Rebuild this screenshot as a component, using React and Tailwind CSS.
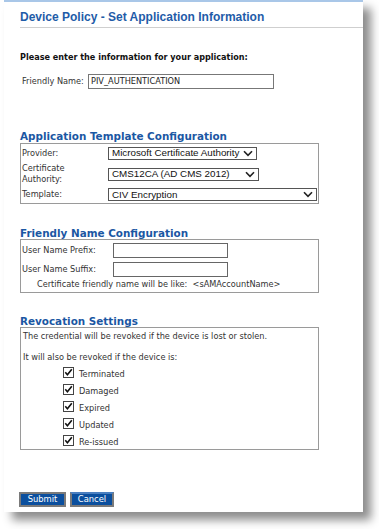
import React from 'react';

const verdana = { fontFamily: '"DejaVu Sans", Verdana, sans-serif' };
const arial = { fontFamily: '"Liberation Sans", Arial, sans-serif' };

const Chevron = () => (
  <svg width="10" height="7" viewBox="0 0 10 7" className="shrink-0">
    <path d="M1 1.2 L5 5.4 L9 1.2" fill="none" stroke="#222" strokeWidth="1.6" />
  </svg>
);

const FakeSelect = ({ value, width }) => (
  <div
    className="flex items-center justify-between h-[13px] border border-[#555] bg-white pl-[3px] pr-[3px] text-[9.8px] text-[#111] leading-none"
    style={{ ...arial, width }}
  >
    <span className="whitespace-nowrap">{value}</span>
    <Chevron />
  </div>
);

const CheckBox = () => (
  <svg width="11" height="11" viewBox="0 0 11 11" className="shrink-0">
    <rect x="0.5" y="0.5" width="10" height="10" fill="#fff" stroke="#444" />
    <path d="M2.3 5.3 L4.4 7.8 L8.8 2.2" fill="none" stroke="#111" strokeWidth="1.6" />
  </svg>
);

const Heading = ({ children, className = '' }) => (
  <div className={`text-[10.4px] font-bold text-[#1b57a3] leading-[12px] ${className}`} style={verdana}>
    {children}
  </div>
);

export default function App() {
  const reasons = ['Terminated', 'Damaged', 'Expired', 'Updated', 'Re-issued'];

  return (
    <div className="w-[379px] h-[529px] bg-white overflow-hidden">
      <div className="ml-[4px] w-[359px] h-[512px] bg-white border-t-2 border-[#a9c7e8] shadow-[8px_8px_9px_rgba(0,0,0,0.45)] flex flex-col text-[#333]" style={verdana}>
        <div className="ml-[16px] mt-[7px] text-[12px] font-bold text-[#1f5ca8] leading-[16px]" style={arial}>
          Device Policy - Set Application Information
        </div>
        <div className="ml-[16px] mt-[2px] h-px bg-[#cfcfcf]" />

        <div className="ml-[16px] mt-[24px] text-[8.1px] font-bold text-[#111] leading-[10px]">
          Please enter the information for your application:
        </div>

        <div className="ml-[18px] mt-[12px] flex items-center h-[15px]">
          <span className="text-[8.2px] w-[66px]">Friendly Name:</span>
          <div className="w-[186px] h-[15px] border border-[#777] bg-white flex items-center pl-[2px] text-[8.2px] text-[#222]">
            PIV_AUTHENTICATION
          </div>
        </div>

        <Heading className="ml-[16px] mt-[41px]">Application Template Configuration</Heading>
        <div className="ml-[16px] mt-[1px] w-[299px] border border-[#9a9a9a] pt-[1px] pb-[1px] flex flex-col gap-[2px]">
          <div className="flex items-center h-[16px] pl-[1px]">
            <span className="w-[86px] text-[8.2px]">Provider:</span>
            <FakeSelect value="Microsoft Certificate Authority" width={149} />
          </div>
          <div className="flex items-center h-[22px] pl-[1px]">
            <span className="w-[86px] text-[8.2px] leading-[11px]">Certificate<br />Authority:</span>
            <FakeSelect value="CMS12CA (AD CMS 2012)" width={151} />
          </div>
          <div className="flex items-center h-[15px] pl-[1px]">
            <span className="w-[86px] text-[8.2px]">Template:</span>
            <FakeSelect value="CIV Encryption" width={209} />
          </div>
        </div>

        <Heading className="ml-[16px] mt-[23px]">Friendly Name Configuration</Heading>
        <div className="ml-[16px] mt-[0px] w-[299px] h-[54px] border border-[#9a9a9a] pt-[2px] flex flex-col">
          <div className="flex items-center h-[16px] pl-[1px]">
            <span className="w-[91px] text-[8.2px]">User Name Prefix:</span>
            <div className="w-[115px] h-[15px] border border-[#666] bg-white" />
          </div>
          <div className="flex items-center h-[16px] pl-[1px] mt-[3px]">
            <span className="w-[91px] text-[8.2px]">User Name Suffix:</span>
            <div className="w-[115px] h-[15px] border border-[#666] bg-white" />
          </div>
          <div className="pl-[16px] mt-[2px] text-[8.2px] leading-[10px] whitespace-pre">
            Certificate friendly name will be like:  &lt;sAMAccountName&gt;
          </div>
        </div>

        <Heading className="ml-[16px] mt-[22px]">Revocation Settings</Heading>
        <div className="ml-[16px] mt-0 w-[299px] h-[123px] border border-[#9a9a9a] pl-[2px] pt-[3px] flex flex-col">
          <div className="text-[8.2px] leading-[10px]">The credential will be revoked if the device is lost or stolen.</div>
          <div className="text-[8.2px] leading-[10px] mt-[11px]">It will also be revoked if the device is:</div>
          <div className="flex flex-col mt-[5px] pl-[40px] gap-[6px]">
            {reasons.map((r) => (
              <div key={r} className="flex items-center h-[11px] gap-[5px]">
                <CheckBox />
                <span className="text-[8.2px] leading-[10px] mt-[2px]">{r}</span>
              </div>
            ))}
          </div>
        </div>

        <div className="ml-[15px] mt-[42px] flex gap-[4px]">
          <button className="w-[47px] h-[15px] border-2 border-[#7a7a7a] bg-[#0b4f9e] text-white text-[8.4px] leading-none flex items-center justify-center" style={verdana}>
            Submit
          </button>
          <button className="w-[44px] h-[15px] border-2 border-[#7a7a7a] border-t-[#4a7fc0] bg-[#0b4f9e] text-white text-[8.4px] leading-none flex items-center justify-center" style={verdana}>
            Cancel
          </button>
        </div>
      </div>
    </div>
  );
}
